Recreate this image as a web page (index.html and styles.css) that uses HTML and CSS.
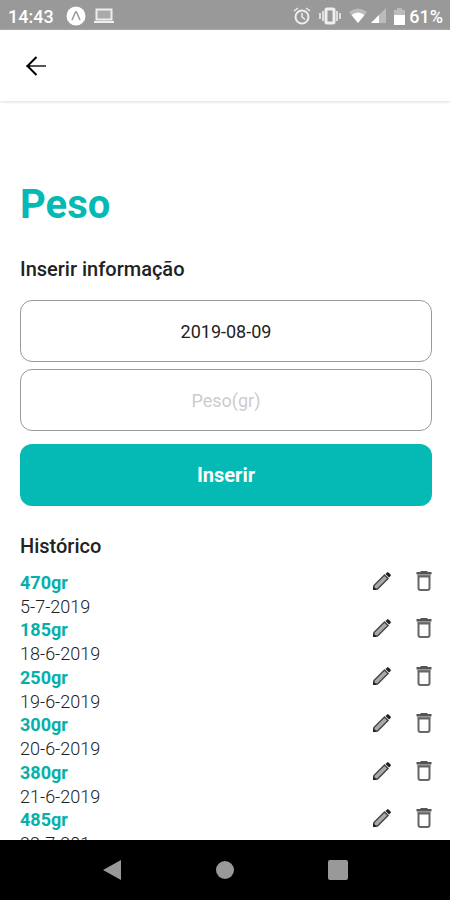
FILE: index.html
```html
<!DOCTYPE html>
<html lang="pt">
<head>
    <meta charset="UTF-8">
    <meta name="viewport" content="width=device-width, initial-scale=1">
    <title>Peso</title>
    <link rel="stylesheet" href="styles.css">
</head>
<body>
    <!-- icons used more than once -->
    <svg class="sprite" aria-hidden="true">
        <symbol id="icon-edit" viewBox="0 0 20 20">
            <path fill="#aaa" d="M2.500 14.500 12.500 4.500l3 3-10 10-3 .5z"/>
            <path fill="none" stroke="#444" stroke-width="1.500" d="M2 18v-3.500L12.500 4l3.500 3.500L5.500 18z"/>
            <path fill="#222" d="M1 19v-4l4 4zM13.500 3l1.600-1.600q.7-.7 1.400 0l2.100 2.100q.7.700 0 1.400L17 6.500z"/>
        </symbol>
        <symbol id="icon-delete" viewBox="0 0 16 20">
            <path fill="#555" d="M5 0h6l1 1h3.500v2.500H.5V1H4z"/>
            <path fill="#888" d="M1.500 3.500h13v2h-13z"/>
            <path fill="none" stroke="#666" stroke-width="2" d="M2.500 5.500h11V17q0 2-2 2h-7q-2 0-2-2z"/>
        </symbol>
    </svg>

    <div class="status-bar">
        <span class="clock">14:43</span>
        <svg class="expo" width="20" height="20" viewBox="0 0 20 20">
            <circle cx="10" cy="10" r="9.500" fill="#fff"/>
            <path fill="none" stroke="#999" stroke-width="1.500" d="M6 14l3.500-8h1L14 14"/>
        </svg>
        <svg class="laptop" width="20" height="16" viewBox="0 0 20 16">
            <path fill="#aaa" stroke="#eee" stroke-width="2" d="M2.500 1.500h15v10h-15z"/>
            <path fill="#eee" d="M0 13h20v2H0z"/>
        </svg>
        <div class="status-right">
            <svg class="alarm" width="18" height="18" viewBox="0 0 18 18" fill="none" stroke="#eee" stroke-width="2">
                <circle cx="9" cy="10" r="6.500"/>
                <path d="M1 4l4-3M17 4l-4-3M9 6v4l3 2.500" stroke-width="1.500"/>
            </svg>
            <svg class="vibrate" width="22" height="18" viewBox="0 0 22 18">
                <path fill="none" stroke="#ddd" stroke-width="2" d="M1 6v6M4 4v10M18 4v10M21 6v6"/>
                <rect x="7" y="2" width="8" height="14" rx="1" fill="#999" stroke="#eee" stroke-width="3"/>
            </svg>
            <svg class="wifi" width="18" height="16" viewBox="0 0 18 16">
                <path fill="#bbb" d="M0 4q9-7 18 0L9 15z"/>
                <path fill="#fff" d="M2.500 7q6.500-5 13 0L9 15z"/>
            </svg>
            <svg class="signal" width="16" height="16" viewBox="0 0 16 16">
                <path fill="#bbb" d="M16 0v15H1z"/>
                <path fill="#fff" d="M9 7v8H1z"/>
            </svg>
            <svg class="battery" width="11" height="17" viewBox="0 0 11 17">
                <path fill="#bbb" d="M3 0h5v2h3v6H0V2h3z"/>
                <path fill="#fff" d="M0 7h11v10H0z"/>
            </svg>
            <span>61%</span>
        </div>
    </div>

    <header class="header">
        <button class="icon-button" aria-label="Voltar">
            <svg width="20" height="20" viewBox="0 0 20 20" fill="none" stroke-width="2">
                <path stroke="#555" d="M2 10h18"/>
                <path stroke="#000" d="M10.500 1 1.500 10l9 9"/>
                <path fill="#000" d="M0 10l4-3v6z"/>
            </svg>
        </button>
    </header>

    <main class="content">
        <h1>Peso</h1>
        <form class="weight-form" onsubmit="return false">
            <h2>Inserir informação</h2>
            <input type="text" class="field" value="2019-08-09" aria-label="Data">
            <input type="text" class="field" placeholder="Peso(gr)" aria-label="Peso em gramas">
            <button class="submit">Inserir</button>
        </form>

        <h2>Histórico</h2>
        <ul class="history">
            <li>
                <div class="entry"><strong>470gr</strong><span>5-7-2019</span></div>
                <button class="icon-button" aria-label="Editar"><svg width="20" height="20"><use href="#icon-edit"/></svg></button>
                <button class="icon-button" aria-label="Apagar"><svg width="16" height="20"><use href="#icon-delete"/></svg></button>
            </li>
            <li>
                <div class="entry"><strong>185gr</strong><span>18-6-2019</span></div>
                <button class="icon-button" aria-label="Editar"><svg width="20" height="20"><use href="#icon-edit"/></svg></button>
                <button class="icon-button" aria-label="Apagar"><svg width="16" height="20"><use href="#icon-delete"/></svg></button>
            </li>
            <li>
                <div class="entry"><strong>250gr</strong><span>19-6-2019</span></div>
                <button class="icon-button" aria-label="Editar"><svg width="20" height="20"><use href="#icon-edit"/></svg></button>
                <button class="icon-button" aria-label="Apagar"><svg width="16" height="20"><use href="#icon-delete"/></svg></button>
            </li>
            <li>
                <div class="entry"><strong>300gr</strong><span>20-6-2019</span></div>
                <button class="icon-button" aria-label="Editar"><svg width="20" height="20"><use href="#icon-edit"/></svg></button>
                <button class="icon-button" aria-label="Apagar"><svg width="16" height="20"><use href="#icon-delete"/></svg></button>
            </li>
            <li>
                <div class="entry"><strong>380gr</strong><span>21-6-2019</span></div>
                <button class="icon-button" aria-label="Editar"><svg width="20" height="20"><use href="#icon-edit"/></svg></button>
                <button class="icon-button" aria-label="Apagar"><svg width="16" height="20"><use href="#icon-delete"/></svg></button>
            </li>
            <li>
                <div class="entry"><strong>485gr</strong><span>22-7-201</span></div>
                <button class="icon-button" aria-label="Editar"><svg width="20" height="20"><use href="#icon-edit"/></svg></button>
                <button class="icon-button" aria-label="Apagar"><svg width="16" height="20"><use href="#icon-delete"/></svg></button>
            </li>
        </ul>
    </main>

    <nav class="nav-bar">
        <button class="icon-button" aria-label="Retroceder">
            <svg width="20" height="22" viewBox="0 0 20 22"><path fill="#999" d="M19 1v20L1 11z"/></svg>
        </button>
        <button class="icon-button" aria-label="Início">
            <svg width="20" height="20" viewBox="0 0 20 20"><circle cx="10" cy="10" r="9" fill="#999"/></svg>
        </button>
        <button class="icon-button" aria-label="Recentes">
            <svg width="20" height="20" viewBox="0 0 20 20"><rect width="20" height="20" rx="2" fill="#999"/></svg>
        </button>
    </nav>
</body>
</html>
```

FILE: styles.css
```css
* {
    box-sizing: border-box;
}
body {
    display: flex;
    flex-direction: column;
    height: 100vh;
    margin: 0;
    background: #fff;
    color: #222;
    font-family: Roboto, sans-serif;
    font-size: 18px;
}
svg {
    display: block;
}
.sprite {
    position: absolute;
    width: 0;
    height: 0;
}
.status-bar {
    display: flex;
    flex: none;
    align-items: center;
    height: 30px;
    padding: 2px 7px 0 8px;
    background: #999;
    color: #fff;
    font-weight: 500;
}
.expo {
    margin-left: 12px;
}
.laptop {
    margin-left: 8px;
}
.status-right {
    display: flex;
    align-items: center;
    margin-left: auto;
}
.vibrate {
    margin-left: 8px;
}
.wifi {
    margin-left: 8px;
}
.signal {
    margin-left: 3px;
}
.battery {
    margin: 0 4px 0 8px;
}
.header {
    display: flex;
    flex: none;
    align-items: center;
    height: 71px;
    padding: 0 26px;
    box-shadow: 0 1px 3px #ddd;
}
.icon-button {
    padding: 0;
    border: 0;
    background: none;
    cursor: pointer;
}
.content {
    flex: 1;
    min-height: 0;
    padding: 79px 18px 0 20px;
    overflow: hidden;
}
h1 {
    margin: 0 0 27px;
    color: #05bab4;
    font-size: 40px;
    font-weight: 700;
    line-height: 50px;
}
h2 {
    margin: 0;
    font-size: 20px;
    font-weight: 500;
    line-height: 24px;
}
.weight-form {
    display: flex;
    flex-direction: column;
    margin-bottom: 28px;
}
.weight-form h2 {
    margin-bottom: 19px;
}
.field {
    width: 100%;
    height: 62px;
    margin-bottom: 7px;
    border: 1px solid #999;
    border-radius: 12px;
    background: none;
    color: #222;
    font: inherit;
    text-align: center;
}
.field::placeholder {
    color: #ccc;
}
.submit {
    height: 62px;
    margin-top: 6px;
    border: 0;
    border-radius: 12px;
    background: #05bab4;
    color: #fff;
    font: inherit;
    font-size: 20px;
    font-weight: 700;
}
.history {
    margin: 13px 0 0;
    padding: 0;
    list-style: none;
}
.history li {
    display: flex;
    align-items: flex-start;
    gap: 24px;
    height: 48px;
}
.history li:nth-child(odd) {
    height: 47px;
}
.entry {
    display: flex;
    flex: 1;
    flex-direction: column;
    font-weight: 300;
    line-height: 24px;
}
.entry strong {
    color: #05b0aa;
    font-weight: 700;
}
.nav-bar {
    display: grid;
    flex: none;
    grid-template-columns: repeat(3, 1fr);
    place-items: center;
    height: 60px;
    padding: 0 56px;
    background: #000;
}
```
